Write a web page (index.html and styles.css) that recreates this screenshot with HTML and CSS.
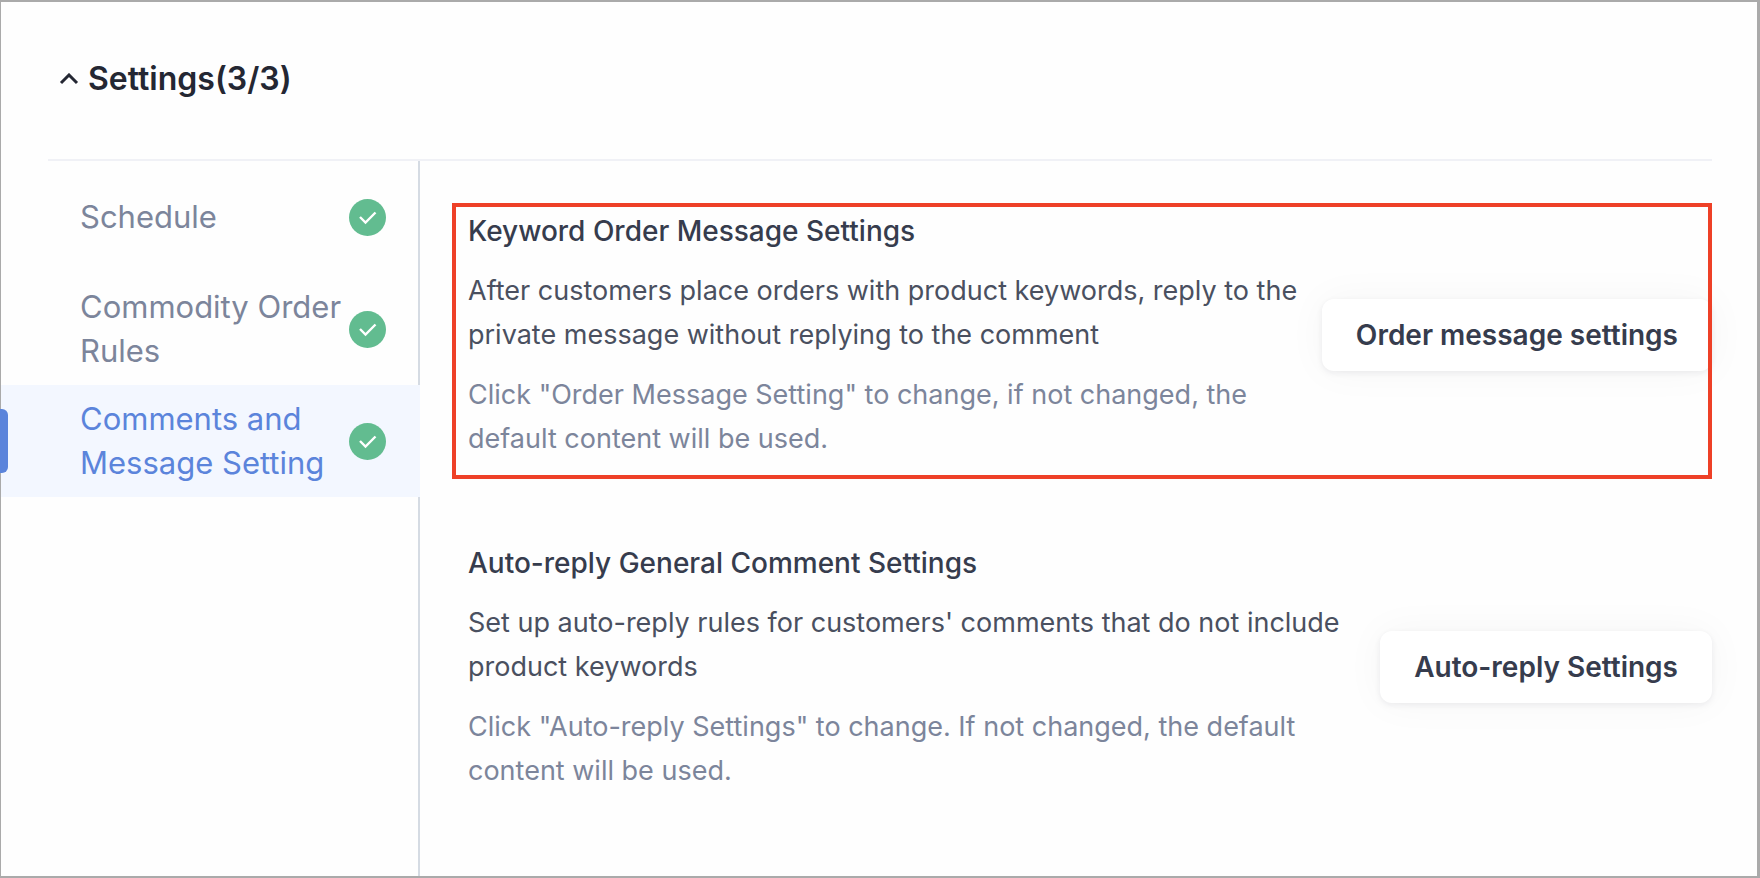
FILE: index.html
```html
<!DOCTYPE html>
<html lang="en">
<head>
  <meta charset="UTF-8">
  <title>Settings</title>
  <link rel="stylesheet" href="styles.css">
</head>
<body>

  <div class="panel">
    <button class="panel-header" type="button" aria-expanded="true">
      <svg class="chevron" viewBox="0 0 20 12" fill="none" stroke="currentColor" stroke-width="3">
        <path d="M2 10 L10 2 L18 10" />
      </svg>
      <span>Settings(3/3)</span>
    </button>

    <div class="panel-body">
      <nav class="steps">
        <a class="step" href="#schedule">
          <span class="step-name">Schedule</span>
          <svg class="check" viewBox="0 0 37 37">
            <circle cx="18.5" cy="18.5" r="18.5" fill="#62bc90" />
            <path d="M11 18 L16.5 23.5 L26.5 13.5" fill="none" stroke="#fff" stroke-width="2.4" />
          </svg>
        </a>
        <a class="step" href="#rules">
          <span class="step-name">Commodity Order Rules</span>
          <svg class="check" viewBox="0 0 37 37">
            <circle cx="18.5" cy="18.5" r="18.5" fill="#62bc90" />
            <path d="M11 18 L16.5 23.5 L26.5 13.5" fill="none" stroke="#fff" stroke-width="2.4" />
          </svg>
        </a>
        <a class="step active" href="#comments">
          <span class="step-name">Comments and Message Setting</span>
          <svg class="check" viewBox="0 0 37 37">
            <circle cx="18.5" cy="18.5" r="18.5" fill="#62bc90" />
            <path d="M11 18 L16.5 23.5 L26.5 13.5" fill="none" stroke="#fff" stroke-width="2.4" />
          </svg>
        </a>
      </nav>

      <main class="content">
        <section class="setting highlighted">
          <div class="setting-text">
            <h2>Keyword Order Message Settings</h2>
            <p>After customers place orders with product keywords, reply to the private message without replying to the comment</p>
            <p class="hint">Click "Order Message Setting" to change, if not changed, the default content will be used.</p>
          </div>
          <button class="btn" type="button">Order message settings</button>
        </section>

        <section class="setting">
          <div class="setting-text">
            <h2>Auto-reply General Comment Settings</h2>
            <p>Set up auto-reply rules for customers' comments that do not include product keywords</p>
            <p class="hint">Click "Auto-reply Settings" to change. If not changed, the default content will be used.</p>
          </div>
          <button class="btn" type="button">Auto-reply Settings</button>
        </section>
      </main>
    </div>
  </div>

</body>
</html>
```

FILE: styles.css
```css
* {
  box-sizing: border-box;
}

body {
  margin: 0;
  font-family: Inter, "Liberation Sans", sans-serif;
  font-size: 27px;
  line-height: 44px;
  color: #4a5060;
  background-color: #fefefe;
}

.panel {
  display: flex;
  flex-direction: column;
  min-height: 100vh;
  border: 2px solid #aaa;
  border-left-width: 1px;
  border-right-width: 3px;
}

.panel-header {
  display: flex;
  align-items: center;
  gap: 9px;
  margin: 0 45px 0 47px;
  padding: 55px 0 58px 11px;
  border: none;
  border-bottom: 2px solid #f0f1f6;
  background: none;
  font: inherit;
  font-size: 32px;
  font-weight: 600;
  color: #242733;
  cursor: pointer;
}

.chevron {
  width: 20px;
  height: 12px;
}

.panel-body {
  display: flex;
  flex: 1;
}

.steps {
  flex: none;
  width: 419px;
  border-right: 2px solid #d5dbe3;
}

.step {
  position: relative;
  display: flex;
  align-items: center;
  justify-content: space-between;
  height: 112px;
  padding: 0 32px 0 79px;
  font-size: 31px;
  color: #7c859b;
  text-decoration: none;
}

.step-name {
  width: 264px;
}

.check {
  flex: none;
  width: 37px;
  height: 37px;
}

.step.active {
  margin-right: -2px;
  padding-right: 34px;
  background-color: #f3f7ff;
  color: #5b84db;
}

.step.active::before {
  content: "";
  position: absolute;
  left: -1px;
  top: 24px;
  width: 8px;
  height: 64px;
  border-radius: 0 6px 6px 0;
  background-color: #5b84db;
}

.content {
  display: flex;
  flex: 1;
  flex-direction: column;
  gap: 80px;
  padding: 48px 45px 48px 48px;
}

.setting {
  position: relative;
  display: flex;
  align-items: center;
  justify-content: space-between;
  gap: 12px;
}

.setting h2 {
  margin: 0;
  font-size: 28px;
  font-weight: 500;
  color: #363c4d;
}

.setting p {
  margin: 16px 0 0;
}

.setting .hint {
  color: #7c859b;
}

/* red frame drawn over the row and its button */
.highlighted::after {
  content: "";
  position: absolute;
  inset: -6px 0 -18px -16px;
  border: 4px solid #ee4027;
  pointer-events: none;
}

.btn {
  flex: none;
  height: 72px;
  padding: 0 34px;
  border: none;
  border-radius: 12px;
  background-color: #fff;
  box-shadow: 0 2px 6px rgba(30, 35, 60, 0.07), 0 0 40px rgba(0, 0, 0, 0.04);
  font: inherit;
  font-size: 28px;
  font-weight: 600;
  color: #363c4d;
  cursor: pointer;
}
```
